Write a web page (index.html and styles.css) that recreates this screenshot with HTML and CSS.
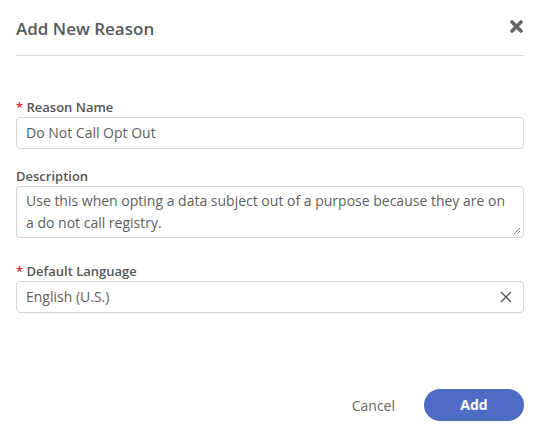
FILE: index.html
```html
<!DOCTYPE html>
<html>
<head>
<meta charset="utf-8">
<link rel="stylesheet" href="styles.css">
</head>
<body>
<div class="modal">
  <div class="header">
    <h1 class="title">Add New Reason</h1>
    <button class="close" aria-label="Close">
      <svg width="13" height="13" viewBox="0 0 13 13"><path d="M2 2 L11 11 M11 2 L2 11" stroke="#666" stroke-width="3.6" stroke-linecap="round"/></svg>
    </button>
  </div>
  <div class="form">
    <div class="field">
      <label class="label"><span class="req">*</span> Reason Name</label>
      <div class="input">Do Not Call Opt Out</div>
    </div>
    <div class="field">
      <label class="label">Description</label>
      <div class="textarea">Use this when opting a data subject out of a purpose because they are on a do not call registry.
        <svg class="grip" width="8" height="8" viewBox="0 0 8 8"><path d="M7 1 L1 7 M7 4 L4 7" stroke="#888" stroke-width="1"/></svg>
      </div>
    </div>
    <div class="field lang">
      <label class="label"><span class="req">*</span> Default Language</label>
      <div class="input select">
        <span>English (U.S.)</span>
        <svg width="12" height="12" viewBox="0 0 12 12"><path d="M1 1 L11 11 M11 1 L1 11" stroke="#555" stroke-width="1.4"/></svg>
      </div>
    </div>
  </div>
  <div class="footer">
    <button class="cancel">Cancel</button>
    <button class="add">Add</button>
  </div>
</div>
</body>
</html>
```
FILE: styles.css
```css
* { box-sizing: border-box; }
body {
  margin: 0;
  background: #fff;
  font-family: "Open Sans", "Liberation Sans", sans-serif;
  color: #555;
}
.modal {
  padding: 0 17px 0 16px;
}
.header {
  display: flex;
  justify-content: space-between;
  align-items: flex-start;
  padding: 18px 0 15px;
  border-bottom: 1px solid #d9d9d9;
}
.title {
  margin: 0;
  font-size: 17px;
  line-height: 22px;
  font-weight: 600;
  color: #595959;
}
.close {
  border: 0;
  background: none;
  padding: 0;
  margin-top: 2px;
  margin-right: 1px;
  width: 13px;
  height: 13px;
  display: flex;
}
.form {
  padding-top: 42px;
  display: flex;
  flex-direction: column;
  gap: 18px;
}
.field.lang { margin-top: 6px; }
.label {
  display: block;
  font-size: 13px;
  line-height: 18px;
  font-weight: 600;
  color: #555;
  margin-bottom: 1px;
}
.req { color: #e0262d; }
.input {
  height: 32px;
  border: 1px solid #d4d4d4;
  border-radius: 4px;
  padding: 0 9px;
  font-size: 14px;
  line-height: 30px;
  color: #5e5e5e;
}
.select {
  display: flex;
  justify-content: space-between;
  align-items: center;
  padding-right: 11px;
}
.textarea {
  position: relative;
  height: 52px;
  border: 1px solid #d4d4d4;
  border-radius: 4px;
  padding: 3px 9px;
  font-size: 14px;
  line-height: 22px;
  color: #5e5e5e;
}
.grip {
  position: absolute;
  right: 2px;
  bottom: 2px;
}
.footer {
  margin-top: 76px;
  display: flex;
  justify-content: flex-end;
  align-items: center;
  gap: 29px;
}
.cancel {
  border: 0;
  background: none;
  padding: 0;
  font-family: inherit;
  font-size: 14px;
  color: #666;
}
.add {
  width: 100px;
  height: 32px;
  border: 0;
  border-radius: 16px;
  background: #4e6bc6;
  color: #fff;
  font-family: inherit;
  font-size: 14px;
  font-weight: 700;
  line-height: 30px;
  padding-bottom: 2px;
}
```
